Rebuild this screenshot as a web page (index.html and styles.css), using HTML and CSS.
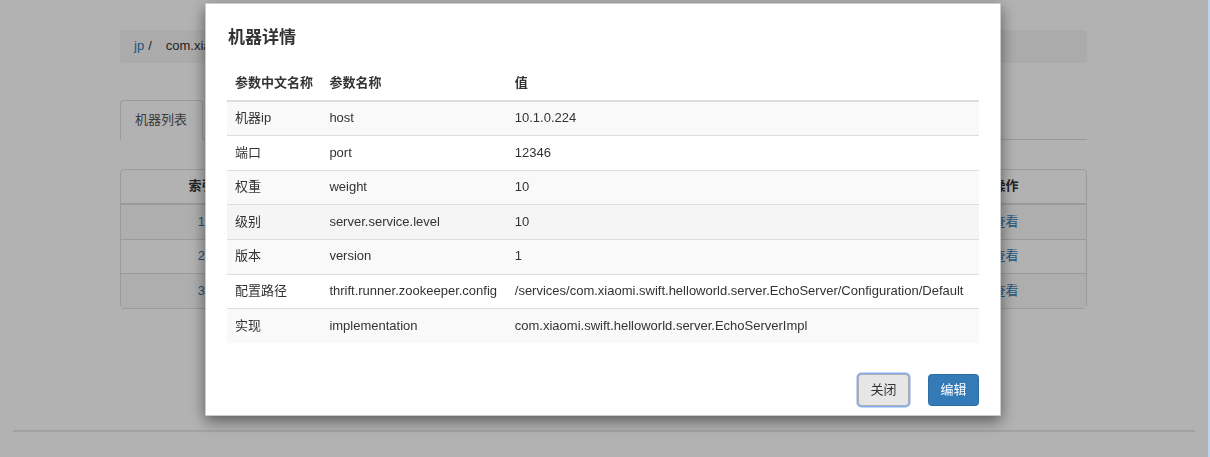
FILE: index.html
```html
<!DOCTYPE html>
<html lang="zh-CN">
<head>
<meta charset="utf-8">
<title>机器详情</title>
<link rel="stylesheet" href="styles.css">
</head>
<body>
<div class="page">
  <div class="container">
    <div class="breadcrumb"><a class="crumb-link">jp</a><span class="sep">/</span><span class="crumb">com.xiaomi.swift.helloworld.server.EchoServer</span></div>
    <div class="tabs">
      <div class="tab active">机器列表</div>
      <div class="tab-line"></div>
    </div>
    <div class="list">
      <div class="list-row list-head">
        <div>索引</div><div></div><div></div><div></div><div></div><div>操作</div>
      </div>
      <div class="list-row striped">
        <div class="link">1</div><div></div><div></div><div></div><div></div><div class="link">查看</div>
      </div>
      <div class="list-row">
        <div class="link">2</div><div></div><div></div><div></div><div></div><div class="link">查看</div>
      </div>
      <div class="list-row striped">
        <div class="link">3</div><div></div><div></div><div></div><div></div><div class="link">查看</div>
      </div>
    </div>
  </div>
  <div class="footer-line"></div>
</div>

<div class="overlay">
  <div class="modal">
    <h4 class="modal-title">机器详情</h4>
    <table class="detail">
      <thead>
        <tr><th class="c1">参数中文名称</th><th class="c2">参数名称</th><th>值</th></tr>
      </thead>
      <tbody>
        <tr class="odd"><td>机器ip</td><td>host</td><td>10.1.0.224</td></tr>
        <tr><td>端口</td><td>port</td><td>12346</td></tr>
        <tr class="odd"><td>权重</td><td>weight</td><td>10</td></tr>
        <tr class="hover"><td>级别</td><td>server.service.level</td><td>10</td></tr>
        <tr class="odd"><td>版本</td><td>version</td><td>1</td></tr>
        <tr><td>配置路径</td><td>thrift.runner.zookeeper.config</td><td>/services/com.xiaomi.swift.helloworld.server.EchoServer/Configuration/Default</td></tr>
        <tr class="odd"><td>实现</td><td>implementation</td><td>com.xiaomi.swift.helloworld.server.EchoServerImpl</td></tr>
      </tbody>
    </table>
    <div class="modal-footer">
      <button class="btn btn-default">关闭</button>
      <button class="btn btn-primary">编辑</button>
    </div>
  </div>
</div>
<div class="edge"></div>
</body>
</html>
```

FILE: styles.css
```css
html, body {
  margin: 0;
  padding: 0;
  background: #fff;
  font-family: "Liberation Sans", "Noto Sans CJK SC", sans-serif;
  font-size: 13px;
  line-height: 18.6px;
  color: #333;
  overflow: hidden;
}

.page {
  padding-top: 30px;
  height: 457px;
  box-sizing: border-box;
}

.container {
  margin-left: 120px;
  width: 967px;
}

.breadcrumb {
  height: 33px;
  box-sizing: border-box;
  padding: 7px 14px;
  background: #f5f5f5;
  border-radius: 4px;
  display: flex;
  white-space: nowrap;
  overflow: hidden;
}

.crumb-link { color: #337ab7; }
.sep { padding: 0 14px 0 4px; color: #333; }
.crumb {
  color: #333;
  max-width: 40px;
  overflow: hidden;
}

.tabs {
  margin-top: 37px;
  display: flex;
  align-items: flex-end;
}

.tab {
  width: 83px;
  height: 40px;
  box-sizing: border-box;
  border: 1px solid #ddd;
  border-bottom-color: transparent;
  border-radius: 4px 4px 0 0;
  padding: 10px 14px;
  color: #555;
  background: #fff;
}

.tab-line {
  flex: 1;
  border-bottom: 1px solid #ddd;
}

.list {
  margin-top: 29px;
  border: 1px solid #ddd;
  border-radius: 4px;
}

.list-row {
  display: grid;
  grid-template-columns: repeat(6, 1fr);
  border-top: 1px solid #ddd;
}

.list-row > div {
  text-align: center;
  padding: 7.4px;
  min-height: 18.6px;
}

.list-head {
  border-top: 0;
  border-bottom: 2px solid #ddd;
  font-weight: bold;
}

.list-head + .list-row { border-top: 0; }

.striped { background: #f9f9f9; }

.link { color: #337ab7; }

.footer-line {
  margin: 121px 0 0 13px;
  width: 1182px;
  height: 2px;
  background: #e9e9e9;
}

.overlay {
  position: fixed;
  inset: 0;
  background: rgba(0, 0, 0, 0.3);
}

.modal {
  position: absolute;
  left: 205px;
  top: 3px;
  width: 796px;
  height: 413px;
  box-sizing: border-box;
  background: #fff;
  border: 1px solid rgba(0, 0, 0, 0.2);
  border-radius: 1px;
  box-shadow: 0 5px 15px rgba(0, 0, 0, 0.5);
  padding: 22px 21px 0;
}

.modal-title {
  margin: 0;
  font-size: 17px;
  line-height: 24px;
  font-weight: bold;
  color: #333;
  padding-left: 1px;
}

.detail {
  margin-top: 16px;
  width: 752px;
  border-collapse: collapse;
  border-spacing: 0;
}

.detail th,
.detail td {
  text-align: left;
  padding: 7.5px 7.4px 7.5px 8px;
  line-height: 18.6px;
  white-space: nowrap;
}

.detail th {
  font-weight: bold;
  border-bottom: 2px solid #ddd;
}

.detail td {
  border-top: 1px solid #ddd;
}

.detail tbody tr:first-child td { border-top: 0; }

.detail .c1 { width: 79px; }
.detail .c2 { width: 170px; }

.detail tr.odd td { background: #f9f9f9; }
.detail tr.hover td { background: #f5f5f5; }

.modal-footer {
  margin-top: 31px;
  display: flex;
  justify-content: flex-end;
  gap: 19px;
}

.btn {
  font-family: "Liberation Sans", "Noto Sans CJK SC", sans-serif;
  font-size: 13px;
  line-height: 18.6px;
  padding: 5.8px 11.5px;
  border-radius: 3.5px;
  border: 1px solid transparent;
  margin: 0;
}

.btn-default {
  background: #e6e6e6;
  border-color: #adadad;
  color: #333;
  box-shadow: 0 0 0 1.5px #86aef0;
}

.btn-primary {
  background: #337ab7;
  border-color: #2e6da4;
  color: #fff;
}

.edge {
  position: fixed;
  top: 0;
  right: 0;
  width: 2px;
  height: 100%;
  background: #bcd4ef;
}
```
